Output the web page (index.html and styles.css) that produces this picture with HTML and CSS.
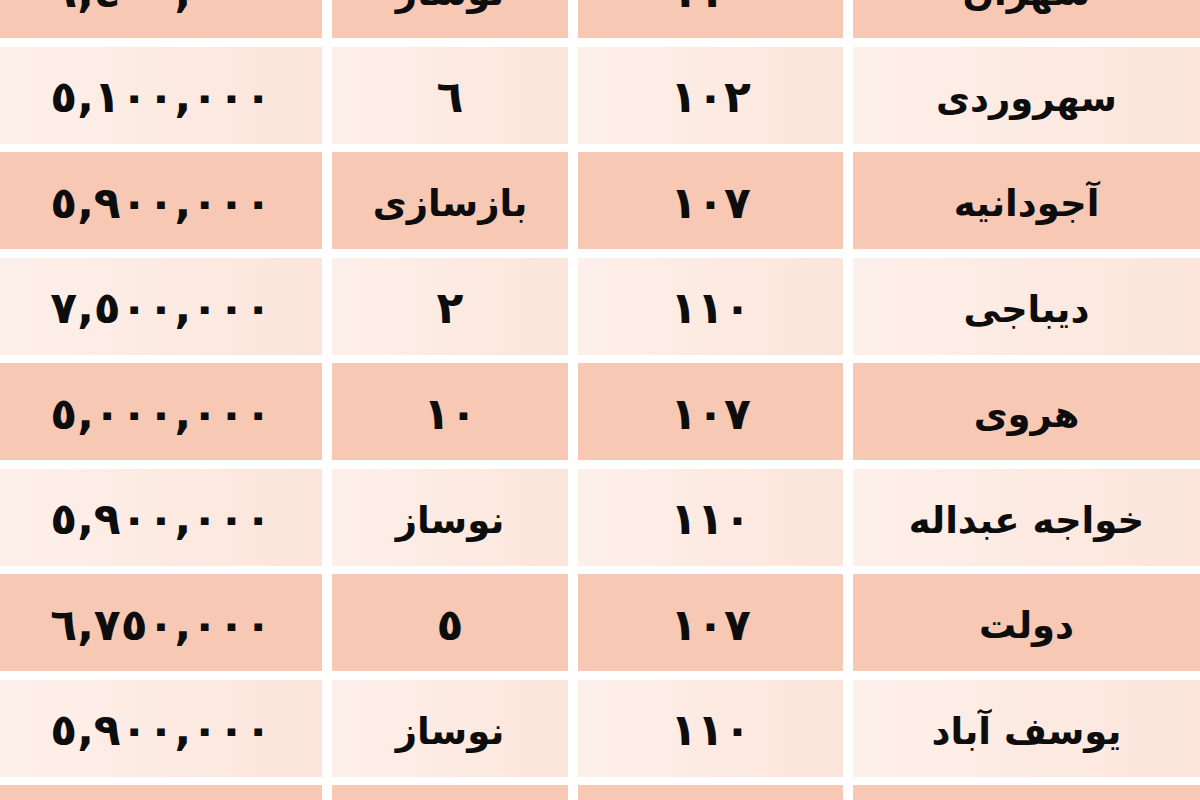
FILE: index.html
```html
<!DOCTYPE html>
<html lang="fa" dir="rtl">
<head>
<meta charset="utf-8">
<title>جدول قیمت</title>
<link rel="stylesheet" href="styles.css">
</head>
<body>
<div class="viewport">
  <div class="table">
    <div class="row dark">
      <div class="cell name">شهران</div>
      <div class="cell num">١١٠</div>
      <div class="cell">نوساز</div>
      <div class="cell num price">٦,٤٠٠,٠٠٠</div>
    </div>
    <div class="row light">
      <div class="cell name">سهروردی</div>
      <div class="cell num">١٠٢</div>
      <div class="cell num">٦</div>
      <div class="cell num price">٥,١٠٠,٠٠٠</div>
    </div>
    <div class="row dark">
      <div class="cell name">آجودانیه</div>
      <div class="cell num">١٠٧</div>
      <div class="cell">بازسازی</div>
      <div class="cell num price">٥,٩٠٠,٠٠٠</div>
    </div>
    <div class="row light">
      <div class="cell name">دیباجی</div>
      <div class="cell num">١١٠</div>
      <div class="cell num">٢</div>
      <div class="cell num price">٧,٥٠٠,٠٠٠</div>
    </div>
    <div class="row dark">
      <div class="cell name">هروی</div>
      <div class="cell num">١٠٧</div>
      <div class="cell num">١٠</div>
      <div class="cell num price">٥,٠٠٠,٠٠٠</div>
    </div>
    <div class="row light">
      <div class="cell name">خواجه عبداله</div>
      <div class="cell num">١١٠</div>
      <div class="cell">نوساز</div>
      <div class="cell num price">٥,٩٠٠,٠٠٠</div>
    </div>
    <div class="row dark">
      <div class="cell name">دولت</div>
      <div class="cell num">١٠٧</div>
      <div class="cell num">٥</div>
      <div class="cell num price">٦,٧٥٠,٠٠٠</div>
    </div>
    <div class="row light">
      <div class="cell name">یوسف آباد</div>
      <div class="cell num">١١٠</div>
      <div class="cell">نوساز</div>
      <div class="cell num price">٥,٩٠٠,٠٠٠</div>
    </div>
    <div class="row dark">
      <div class="cell name">پاسداران</div>
      <div class="cell num">١٠٥</div>
      <div class="cell num">٨</div>
      <div class="cell num price">٦,٢٠٠,٠٠٠</div>
    </div>
  </div>
</div>
</body>
</html>
```

FILE: styles.css
```css
html, body {
  margin: 0;
  padding: 0;
  background: #ffffff;
}

.viewport {
  width: 1200px;
  height: 800px;
  overflow: hidden;
}

.table {
  margin-top: -59px;
  display: flex;
  flex-direction: column;
  gap: 8.5px;
  font-family: "DejaVu Sans", sans-serif;
  font-weight: bold;
  color: #0d0d0d;
}

.row {
  display: grid;
  grid-template-columns: 347px 265px 236px 322px;
  column-gap: 10px;
  height: 97px;
}

.cell {
  display: flex;
  align-items: center;
  justify-content: center;
  padding-top: 6px;
  box-sizing: border-box;
  font-size: 37px;
  line-height: 1;
}

.num {
  direction: ltr;
  unicode-bidi: isolate;
  font-size: 44px;
  padding-top: 4px;
}

.price {
  letter-spacing: -1.5px;
}

.dark .cell {
  background: #f7c8b4;
}

.light .cell {
  background: linear-gradient(90deg, #fdf0ea 0%, #fbe5db 100%);
}
```
